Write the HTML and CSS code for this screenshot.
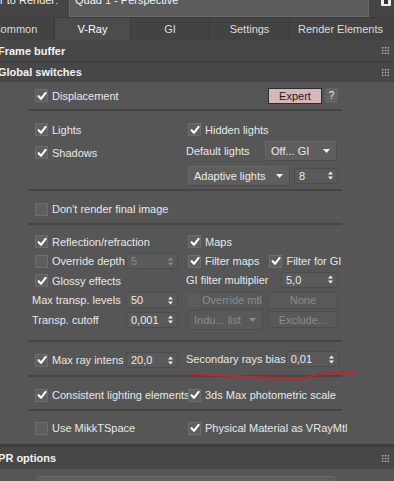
FILE: index.html
```html
<!DOCTYPE html>
<html>
<head>
<meta charset="utf-8">
<link rel="stylesheet" href="styles.css">
</head>
<body>
<div class="app">
  <div class="topbar">
    <span class="top-label">r to Render:</span>
    <div class="top-select">Quad 1 - Perspective</div>
    <div class="lock"><span></span></div>
  </div>

  <div class="tabs">
    <div class="tab t-common">Common</div>
    <div class="tab active">V-Ray</div>
    <div class="tab">GI</div>
    <div class="tab divided">Settings</div>
    <div class="tab divided t-re">Render Elements</div>
  </div>

  <div class="rollout-head rh-first"><span class="rh-title">Frame buffer</span><svg class="grip" width="7" height="7" viewBox="0 0 7 7"><g fill="#b8b8b8"><rect x="0" y="0" width="1.4" height="1.4"/><rect x="2.8" y="0" width="1.4" height="1.4"/><rect x="5.6" y="0" width="1.4" height="1.4"/><rect x="0" y="2.8" width="1.4" height="1.4"/><rect x="2.8" y="2.8" width="1.4" height="1.4"/><rect x="5.6" y="2.8" width="1.4" height="1.4"/><rect x="0" y="5.6" width="1.4" height="1.4"/><rect x="2.8" y="5.6" width="1.4" height="1.4"/><rect x="5.6" y="5.6" width="1.4" height="1.4"/></g></svg></div>
  <div class="rollout-head"><span class="rh-title">Global switches</span><svg class="grip" width="7" height="7" viewBox="0 0 7 7"><g fill="#b8b8b8"><rect x="0" y="0" width="1.4" height="1.4"/><rect x="2.8" y="0" width="1.4" height="1.4"/><rect x="5.6" y="0" width="1.4" height="1.4"/><rect x="0" y="2.8" width="1.4" height="1.4"/><rect x="2.8" y="2.8" width="1.4" height="1.4"/><rect x="5.6" y="2.8" width="1.4" height="1.4"/><rect x="0" y="5.6" width="1.4" height="1.4"/><rect x="2.8" y="5.6" width="1.4" height="1.4"/><rect x="5.6" y="5.6" width="1.4" height="1.4"/></g></svg></div>

  <div class="content">
    <!-- group 1 -->
    <div class="group g1">
      <div class="cell l"><span class="cb on"><svg viewBox="0 0 10 10"><path d="M1.6 5.2 L4 7.8 L8.6 1.8"/></svg></span><span class="lbl">Displacement</span></div>
      <div class="cell r end">
        <div class="btn-expert">Expert</div>
        <div class="btn-help">?</div>
      </div>
    </div>
    <div class="sep"></div>

    <!-- group 2 -->
    <div class="group g2">
      <div class="cell l"><span class="cb on"><svg viewBox="0 0 10 10"><path d="M1.6 5.2 L4 7.8 L8.6 1.8"/></svg></span><span class="lbl">Lights</span></div>
      <div class="cell r"><span class="cb on"><svg viewBox="0 0 10 10"><path d="M1.6 5.2 L4 7.8 L8.6 1.8"/></svg></span><span class="lbl">Hidden lights</span></div>
      <div class="cell l"><span class="cb on"><svg viewBox="0 0 10 10"><path d="M1.6 5.2 L4 7.8 L8.6 1.8"/></svg></span><span class="lbl">Shadows</span></div>
      <div class="cell r raise"><span class="plain">Default lights</span><div class="dd dd-off">Off... GI<svg class="arr" width="7" height="4" viewBox="0 0 7 4"><path d="M0 0 H7 L3.5 4 Z"/></svg></div></div>
      <div class="cell l"></div>
      <div class="cell r"><div class="dd dd-adapt">Adaptive lights<svg class="arr" width="7" height="4" viewBox="0 0 7 4"><path d="M0 0 H7 L3.5 4 Z"/></svg></div><div class="spin sp-8">8<svg class="updn" width="5" height="9" viewBox="0 0 5 9"><path d="M0 3.6 L2.5 0.6 L5 3.6 Z M0 5.4 L2.5 8.4 L5 5.4 Z"/></svg></div></div>
    </div>
    <div class="sep"></div>

    <!-- group 3 -->
    <div class="group g3">
      <div class="cell l wide"><span class="cb"></span><span class="lbl">Don't render final image</span></div>
    </div>
    <div class="sep"></div>

    <!-- group 4 -->
    <div class="group g4">
      <div class="cell l"><span class="cb on"><svg viewBox="0 0 10 10"><path d="M1.6 5.2 L4 7.8 L8.6 1.8"/></svg></span><span class="lbl">Reflection/refraction</span></div>
      <div class="cell r"><span class="cb on"><svg viewBox="0 0 10 10"><path d="M1.6 5.2 L4 7.8 L8.6 1.8"/></svg></span><span class="lbl">Maps</span></div>

      <div class="cell l"><span class="cb"></span><span class="lbl">Override depth</span><div class="spin sp-l disabled">5<svg class="updn" width="5" height="9" viewBox="0 0 5 9"><path d="M0 3.6 L2.5 0.6 L5 3.6 Z M0 5.4 L2.5 8.4 L5 5.4 Z"/></svg></div></div>
      <div class="cell r"><span class="cb on"><svg viewBox="0 0 10 10"><path d="M1.6 5.2 L4 7.8 L8.6 1.8"/></svg></span><span class="lbl">Filter maps</span><span class="cb on cb-gi"><svg viewBox="0 0 10 10"><path d="M1.6 5.2 L4 7.8 L8.6 1.8"/></svg></span><span class="lbl">Filter for GI</span></div>

      <div class="cell l"><span class="cb on"><svg viewBox="0 0 10 10"><path d="M1.6 5.2 L4 7.8 L8.6 1.8"/></svg></span><span class="lbl">Glossy effects</span></div>
      <div class="cell r raise1"><span class="plain">GI filter multiplier</span><div class="spin sp-gi">5,0<svg class="updn" width="5" height="9" viewBox="0 0 5 9"><path d="M0 3.6 L2.5 0.6 L5 3.6 Z M0 5.4 L2.5 8.4 L5 5.4 Z"/></svg></div></div>

      <div class="cell l"><span class="plain lab-l">Max transp. levels</span><div class="spin sp-l">50<svg class="updn" width="5" height="9" viewBox="0 0 5 9"><path d="M0 3.6 L2.5 0.6 L5 3.6 Z M0 5.4 L2.5 8.4 L5 5.4 Z"/></svg></div></div>
      <div class="cell r"><span class="cb dis"></span><div class="btn dis b-ovr">Override mtl</div><div class="btn dis b-none">None</div></div>

      <div class="cell l"><span class="plain lab-l">Transp. cutoff</span><div class="spin sp-l">0,001<svg class="updn" width="5" height="9" viewBox="0 0 5 9"><path d="M0 3.6 L2.5 0.6 L5 3.6 Z M0 5.4 L2.5 8.4 L5 5.4 Z"/></svg></div></div>
      <div class="cell r"><div class="dd dis dd-incl">Indu... list<svg class="arr" width="7" height="4" viewBox="0 0 7 4"><path d="M0 0 H7 L3.5 4 Z"/></svg></div><div class="btn dis b-excl">Exclude...</div></div>
    </div>
    <div class="sep"></div>

    <!-- group 5 -->
    <div class="group g5">
      <div class="cell l"><span class="cb on"><svg viewBox="0 0 10 10"><path d="M1.6 5.2 L4 7.8 L8.6 1.8"/></svg></span><span class="lbl">Max ray intens</span><div class="spin sp-l">20,0<svg class="updn" width="5" height="9" viewBox="0 0 5 9"><path d="M0 3.6 L2.5 0.6 L5 3.6 Z M0 5.4 L2.5 8.4 L5 5.4 Z"/></svg></div></div>
      <div class="cell r raise1"><span class="plain">Secondary rays bias</span><div class="spin sp-bias">0,01<svg class="updn" width="5" height="9" viewBox="0 0 5 9"><path d="M0 3.6 L2.5 0.6 L5 3.6 Z M0 5.4 L2.5 8.4 L5 5.4 Z"/></svg></div></div>
    </div>
    <div class="sep"></div>

    <!-- group 6 -->
    <div class="group g6">
      <div class="cell l"><span class="cb on"><svg viewBox="0 0 10 10"><path d="M1.6 5.2 L4 7.8 L8.6 1.8"/></svg></span><span class="lbl">Consistent lighting elements</span></div>
      <div class="cell r"><span class="cb on"><svg viewBox="0 0 10 10"><path d="M1.6 5.2 L4 7.8 L8.6 1.8"/></svg></span><span class="lbl">3ds Max photometric scale</span></div>
    </div>
    <div class="sep"></div>

    <!-- group 7 -->
    <div class="group g7">
      <div class="cell l"><span class="cb"></span><span class="lbl">Use MikkTSpace</span></div>
      <div class="cell r"><span class="cb on"><svg viewBox="0 0 10 10"><path d="M1.6 5.2 L4 7.8 L8.6 1.8"/></svg></span><span class="lbl">Physical Material as VRayMtl</span></div>
    </div>
  </div>

  <div class="rollout-head rh-ipr"><span class="rh-title">IPR options</span><svg class="grip" width="7" height="7" viewBox="0 0 7 7"><g fill="#b8b8b8"><rect x="0" y="0" width="1.4" height="1.4"/><rect x="2.8" y="0" width="1.4" height="1.4"/><rect x="5.6" y="0" width="1.4" height="1.4"/><rect x="0" y="2.8" width="1.4" height="1.4"/><rect x="2.8" y="2.8" width="1.4" height="1.4"/><rect x="5.6" y="2.8" width="1.4" height="1.4"/><rect x="0" y="5.6" width="1.4" height="1.4"/><rect x="2.8" y="5.6" width="1.4" height="1.4"/><rect x="5.6" y="5.6" width="1.4" height="1.4"/></g></svg></div>
  <div class="ipr-body"><div class="ipr-box"></div></div>

  <svg class="annot" width="394" height="481" viewBox="0 0 394 481"><path d="M190 373.5 C 215 375, 245 377, 270 377.5 S 300 378.5, 308 377.5 C 312 375, 318 373.8, 330 373.3 S 350 372.3, 355 372"/></svg>
</div>
</body>
</html>
```

FILE: styles.css
```css
* { box-sizing: border-box; }
html, body { margin: 0; padding: 0; }
body {
  background: #565656;
  font-family: "Liberation Sans", Arial, sans-serif;
  font-size: 11px;
  color: #e6e6e6;
  overflow: hidden;
}
.app {
  position: relative;
  width: 394px;
  height: 481px;
  overflow: hidden;
  background: #565656;
}

/* top bar */
.topbar {
  height: 18px;
  background: #454545;
  display: flex;
  align-items: flex-start;
  border-bottom: 1px solid #3c3c3c;
}
.top-label {
  width: 69px;
  margin-top: -5px;
  line-height: 11px;
  color: #f0f0f0;
  white-space: nowrap;
}
.top-select {
  width: 300px;
  height: 23px;
  margin-top: -6px;
  background: #5c5c5c;
  border: 1px solid #6a6a6a;
  padding: 0 5px;
  line-height: 11px;
  color: #f4f4f4;
  font-size: 11px;
}
.lock {
  margin-left: 12px;
  margin-top: -2px;
  width: 10px;
  height: 8px;
  background: #eeeeee;
  border-radius: 1px;
  display: flex;
  justify-content: center;
}
.lock span { width: 4px; height: 4px; margin-top: 2px; background: #333; }

/* tabs */
.tabs {
  height: 22px;
  background: #434343;
  display: flex;
  margin-left: -24px;
  align-items: stretch;
}
.tab {
  width: 82px;
  display: flex;
  align-items: center;
  justify-content: center;
  color: #dcdcdc;
  white-space: nowrap;
}
.tab.active {
  width: 81px;
  background: #4c4c4c;
  color: #ffffff;
  border-left: 1px solid #3a3a3a;
  border-right: 1px solid #3a3a3a;
}
.tab.divided { border-left: 1px solid #383838; }
.tabs .tab:nth-child(4) { width: 84px; }
.tab.t-re { width: 110px; justify-content: flex-start; padding-left: 8px; }

/* rollout headers */
.rollout-head {
  height: 21px;
  background: #474747;
  display: flex;
  align-items: center;
  justify-content: space-between;
  padding: 0 5px 0 0;
  border-top: 1px solid #3b3b3b;
}
.rh-first { border-top: none; height: 21px; }
.rh-title {
  font-weight: bold;
  font-size: 11px;
  color: #f2f2f2;
  margin-left: -2px;
  white-space: nowrap;
}
.grip { display: block; }
.rh-ipr { border-top: 3px solid #3d3d3d; height: 25px; }
.rh-ipr .rh-title { margin-left: -5px; }

/* content */
.content { background: #565656; }
.group {
  display: grid;
  grid-template-columns: 154px 156px;
  padding-left: 32px;
}
.g1 { grid-auto-rows: 27px; }
.g2 { grid-auto-rows: 23px; padding-top: 7px; padding-bottom: 2px; }
.g3 { grid-auto-rows: 20px; padding-top: 8px; padding-bottom: 4px; }
.g4 { grid-auto-rows: 19.5px; padding-top: 7px; padding-bottom: 10.5px; }
.g5 { grid-auto-rows: 20px; padding-top: 8px; padding-bottom: 5px; }
.g6 { grid-auto-rows: 20px; padding-top: 8px; padding-bottom: 4px; }
.g7 { grid-auto-rows: 20px; padding-top: 7px; padding-bottom: 6px; }

.sep {
  height: 2px;
  margin-left: 28px;
  width: 314px;
  background: #454545;
}

.cell {
  display: flex;
  align-items: center;
  white-space: nowrap;
  min-width: 0;
}
.cell.l { padding-left: 3px; padding-right: 8px; }
.cell.r { padding-left: 2px; padding-right: 4px; }
.cell.wide { grid-column: 1 / span 2; }
.cell.end { justify-content: flex-end; }
.cell.raise { margin-bottom: 4px; padding-left: 0; justify-content: space-between; padding-right: 5px; }
.cell.raise1 { margin-bottom: 2px; padding-left: 0; justify-content: space-between; padding-right: 4px; }

.cb {
  flex: none;
  width: 13px;
  height: 13px;
  background: #5f5f5f;
  border: 1px solid #6e6e6e;
  display: flex;
  align-items: center;
  justify-content: center;
}
.cb svg { width: 10px; height: 10px; display: block; }
.cb svg path { fill: none; stroke: #ffffff; stroke-width: 2.1; stroke-linecap: round; stroke-linejoin: round; }
.cb.dis { background: #5c5c5c; border-color: #5c5c5c; }
.cb-gi { margin-left: 10px; }
.lbl { margin-left: 4px; color: #e8e8e8; }
.plain { color: #e8e8e8; }
.lab-l { margin-left: -3px; }

/* buttons */
.btn-expert {
  width: 54px;
  height: 16px;
  background: #d6b6bb;
  border: 1px solid #2e2e2e;
  color: #1e1e1e;
  display: flex;
  align-items: center;
  justify-content: center;
}
.btn-help {
  width: 13px;
  height: 15px;
  margin-left: 3px;
  background: #636363;
  border-radius: 2px;
  color: #f0f0f0;
  display: flex;
  align-items: center;
  justify-content: center;
  font-size: 10px;
}

.dd {
  height: 20px;
  background: #5e5e5e;
  border: 1px solid #676767;
  border-right-color: #4b4b4b;
  border-bottom-color: #4b4b4b;
  display: flex;
  align-items: center;
  justify-content: space-between;
  padding: 0 6px 0 5px;
  color: #ececec;
}
.dd .arr { display: block; }
.dd .arr path { fill: #f0f0f0; }
.dd-off { width: 72px; }
.dd-adapt { width: 104px; padding-left: 5px; }
.dd-incl { width: 77px; height: 20px; }

.spin {
  height: 16px;
  background: #5a5a5a;
  border: 1px solid #4c4c4c;
  display: flex;
  align-items: center;
  justify-content: space-between;
  padding: 0 4px 0 4px;
  color: #ececec;
  margin-left: auto;
  flex: none;
}
.spin .updn { display: block; }
.spin .updn path { fill: #eeeeee; }
.sp-l { width: 52px; }
.sp-8 { width: 44px; margin-left: 4px; }
.sp-gi { width: 57px; }
.sp-bias { width: 53px; }
.spin.disabled { color: #8a8a8a; }
.spin.disabled .updn path { fill: #8a8a8a; }

.btn {
  height: 17px;
  display: flex;
  align-items: center;
  justify-content: center;
  border: 1px solid #4d4d4d;
  background: #595959;
}
.btn.dis, .dd.dis { color: #8c8c8c; }
.dd.dis { background: #595959; border-color: #4d4d4d; }
.dd.dis .arr path { fill: #8c8c8c; }
.b-ovr { width: 62px; }
.b-none { width: 73px; margin-left: 5px; }
.b-excl { width: 73px; margin-left: 5px; }

.ipr-body { height: 20px; padding: 7px 0 0 37px; background: #565656; }
.ipr-box { width: 298px; height: 20px; background: #5d5d5d; border: 1px solid #6a6a6a; border-radius: 2px 2px 0 0; }

.annot { position: absolute; left: 0; top: 0; pointer-events: none; }
.annot path { fill: none; stroke: #c4242a; stroke-width: 2; stroke-linecap: round; }
```
